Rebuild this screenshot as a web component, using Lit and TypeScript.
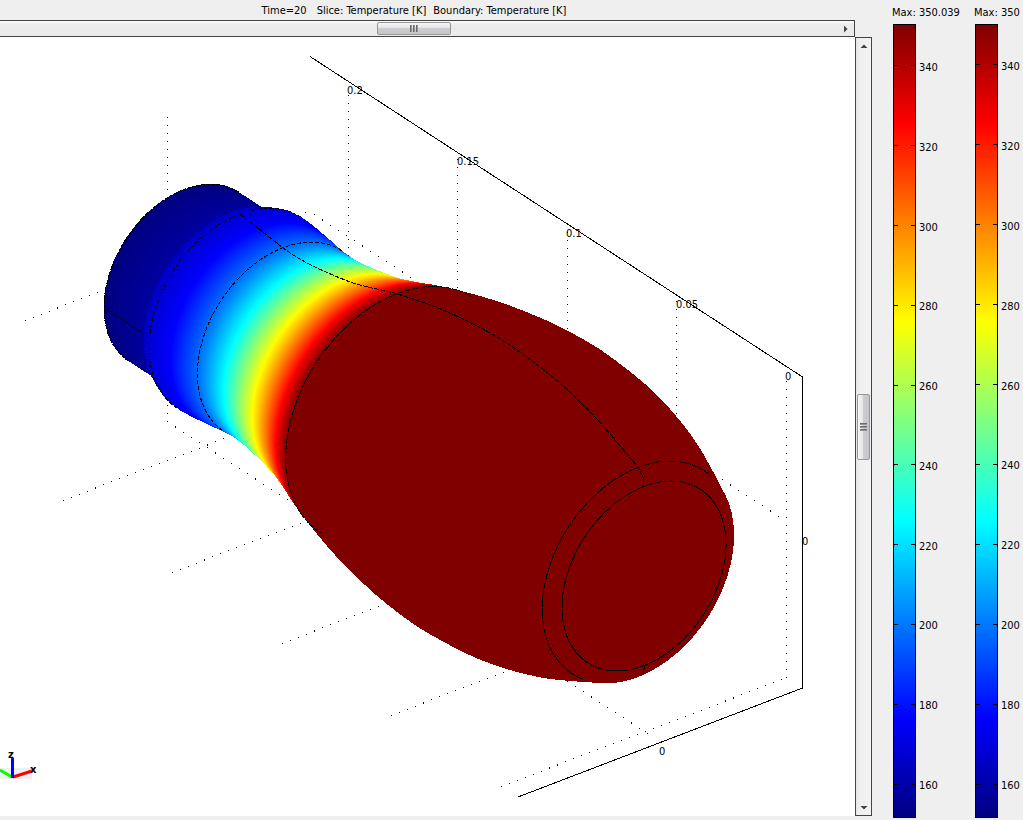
import { LitElement, html, svg, css } from "lit";
import { customElement, property } from "lit/decorators.js";

type Knot = [number, number];

// Radius of the body along its axis (position, scale)
const NECK_END = -549;
const LIP = -494;
const PROFILE: Knot[] = [
  [LIP, 1.055], [-483, 1.1], [-460, 1.08],
  [-431, 1.042], [-415, 1.038], [-390, 1.065], [-352, 1.145], [-331, 1.215],
  [-295, 1.355], [-236, 1.518], [-171, 1.602], [-114, 1.567], [-79, 1.488],
  [-51, 1.387], [-7, 1.17],
];

// Temperature along the axis, as a position on the jet scale
const HEAT: Knot[] = [
  [NECK_END, 0], [LIP - 1, 0.035], [LIP, 0.065], [-483, 0.08], [-460, 0.125],
  [-431, 0.23], [-399, 0.375], [-357, 0.625], [-314, 0.875], [-295, 1], [0, 1],
];

function sample(table: Knot[], x: number): number {
  for (let i = 1; i < table.length; i++) {
    const [x1, y1] = table[i];
    const [x0, y0] = table[i - 1];
    if (x <= x1) return y0 + ((y1 - y0) * (x - x0)) / (x1 - x0);
  }
  return table[table.length - 1][1];
}

function slope(i: number): number {
  const a = PROFILE[Math.max(0, i - 1)];
  const b = PROFILE[Math.min(PROFILE.length - 1, i + 1)];
  return (b[1] - a[1]) / (b[0] - a[0]);
}

// Cubic Hermite curve through the profile; the neck is a plain cylinder
function radius(x: number): number {
  if (x < LIP) return 0.975;
  let i = 1;
  while (i < PROFILE.length - 1 && x > PROFILE[i][0]) i++;
  const [x0, y0] = PROFILE[i - 1];
  const [x1, y1] = PROFILE[i];
  const h = x1 - x0;
  const t = (x - x0) / h;
  const t2 = t * t;
  const t3 = t2 * t;
  return (2 * t3 - 3 * t2 + 1) * y0 + (t3 - 2 * t2 + t) * h * slope(i - 1)
    + (3 * t2 - 2 * t3) * y1 + (t3 - t2) * h * slope(i);
}

function jet(v: number): string {
  const c = (k: number) =>
    Math.round(255 * Math.max(0, Math.min(1, 1.5 - Math.abs(4 * v - k))));
  return `rgb(${c(3)},${c(2)},${c(1)})`;
}

const AX = 0.838;
const AY = 0.545;
const centre = (c: number) => [644 + AX * c, 576 + AY * c];

function disc(c: number, s: number, fill: string) {
  const [x, y] = centre(c);
  return svg`<ellipse rx=${71 * s} ry=${103.5 * s} fill=${fill} transform="translate(${x} ${y}) rotate(33)"></ellipse>`;
}

function arc(c: number, s: number, reach: number, dash: string) {
  const [x, y] = centre(c);
  const pts: string[] = [];
  for (let a = -reach; a <= reach; a += 2) {
    const r = (a * Math.PI) / 180;
    const u = -71 * s * Math.cos(r);
    const n = 103.5 * s * Math.sin(r);
    pts.push(`${(x + u * AX - n * AY).toFixed(1)},${(y + u * AY + n * AX).toFixed(1)}`);
  }
  return svg`<polyline class="edge" points=${pts.join(" ")} stroke-dasharray=${dash}></polyline>`;
}

@customElement("scroll-track")
class ScrollTrack extends LitElement {
  @property({ type: Boolean, reflect: true }) vertical = false;

  static styles = css`
    :host { display: flex; box-sizing: border-box; border: 1px solid #444; border-left-width: 0;
      background: linear-gradient(#fafafa, #ececec 4px, #ebebeb); align-items: center; }
    :host([vertical]) { flex-direction: column; border-left-width: 1px;
      background: linear-gradient(90deg, #e6e6e6, #f0f0f0 4px, #f2f2f2); }
    .before, .after { display: flex; align-items: center; }
    .before { flex: 377; }
    .after { flex: 404; justify-content: flex-end; }
    :host([vertical]) .before { flex: 356; align-items: flex-start; }
    :host([vertical]) .after { flex: 356; align-items: flex-end; }
    .step { border: 0; padding: 0; background: none; width: 15px; height: 15px; display: grid; place-items: center; }
    .thumb { display: flex; justify-content: center; align-items: center; gap: 1px; padding: 0;
      width: 74px; height: 13px; border: 1px solid #979797; border-radius: 2px; box-sizing: border-box;
      background: linear-gradient(#f6f6f6, #e4e4e6 45%, #cdcdd1 50%, #c6c6ca); }
    :host([vertical]) .thumb { flex-direction: column; width: 13px; height: 66px;
      background: linear-gradient(90deg, #f6f6f6, #e4e4e6 45%, #cdcdd1 50%, #c6c6ca); }
    .grip { width: 2px; height: 7px; background: linear-gradient(90deg, #555, #aaa); }
    :host([vertical]) .grip { width: 7px; height: 2px; background: linear-gradient(#555, #aaa); }
  `;

  render() {
    const arrow = (d: string, label: string) => html`
      <button class="step" aria-label=${label}>
        <svg width="8" height="8" viewBox="0 0 8 8"><path d=${d} fill="#444"></path></svg>
      </button>`;
    return html`
      <div class="before">${this.vertical ? arrow("M0.5 6L4 2.5L7.5 6Z", "Scroll up") : ""}</div>
      <button class="thumb" aria-label="Scroll position">
        <span class="grip"></span><span class="grip"></span><span class="grip"></span>
      </button>
      <div class="after">
        ${this.vertical ? arrow("M0.5 2L4 5.5L7.5 2Z", "Scroll down") : arrow("M1 0.5L4.5 4L1 7.5Z", "Scroll right")}
      </div>`;
  }
}

@customElement("colour-scale")
class ColourScale extends LitElement {
  @property() max = "";
  @property({ type: Number }) lead = 40;

  static styles = css`
    :host { display: flex; flex-direction: column; width: 82px; flex: none; }
    .max { box-sizing: border-box; height: 24px; padding-top: 1px; line-height: 24px; white-space: nowrap; }
    .row { display: flex; flex: 1; min-height: 0; }
    .bar { box-sizing: border-box; width: 23px; border: 1px solid #000; display: flex; flex-direction: column; margin-left: 1px;
      background: linear-gradient(#800000, #f00 12.5%, #ff0 37.5%, #0ff 62.5%, #00f 87.5%, #000080); }
    .tick { height: 1px; flex: none; display: flex; justify-content: space-between; }
    .tick::before, .tick::after { content: ""; width: 4px; background: #000; }
    .gap { flex: 789; }
    .labels { display: flex; flex-direction: column; padding: 1px 0 0 3px; }
    .label { height: 1px; line-height: 1px; flex: none; }
    .between { flex: 788; }
    .tail { flex: 320; }
  `;

  render() {
    const marks = [340, 320, 300, 280, 260, 240, 220, 200, 180, 160];
    const lead = (n: number) => html`<div style="flex:${n * 10}"></div>`;
    return html`
      <div class="max">${this.max}</div>
      <div class="row">
        <div class="bar">${marks.map((_, i) => html`${i ? html`<div class="gap"></div>` : lead(this.lead)}<div class="tick"></div>`)}<div class="tail"></div></div>
        <div class="labels">${marks.map((m, i) => html`${i ? html`<div class="between"></div>` : lead(this.lead + 2)}<div class="label">${m}</div>`)}<div class="tail"></div></div>
      </div>`;
  }
}

@customElement("app-root")
class AppRoot extends LitElement {
  static styles = css`
    :host { display: grid; grid-template-columns: minmax(0, 1fr) 151px; height: 100vh; overflow: hidden;
      background: #efefef; color: #000; font: 11px/14px "DejaVu Sans Condensed", "Noto Sans", sans-serif; }
    .view { display: grid; grid-template: 20px 17px minmax(0, 1fr) 4px / minmax(0, 1fr) 17px; }
    .title { margin: 0; font: inherit; line-height: 20px; display: flex; justify-content: center; gap: 10px; padding: 1px 27px 0 0; }
    .title span:last-child { margin-left: -3px; }
    .across { grid-area: 2 / 1; }
    .down { grid-area: 3 / 2; }
    .plot { grid-area: 3 / 1; background: #fff; min-width: 0; overflow: hidden; }
    .plot svg { display: block; width: 100%; height: 100%; }
    .scales { display: flex; padding: 0 0 2px 20px; overflow: hidden; }
    .edge { fill: none; stroke: #000; }
    .dots { fill: none; stroke: #000; stroke-dasharray: 1 7; }
    .slant { fill: none; stroke: #000; stroke-dasharray: 1 7.57; }
    .deep { fill: none; stroke: #000; stroke-dasharray: 1 8.54; }
    .axis { font-weight: bold; font-size: 11px; }
    .triad { fill: none; stroke-width: 3; }
  `;

  private body() {
    const parts = [];
    for (let c = NECK_END; c <= -7; c += c < -290 ? 0.5 : 2) {
      parts.push(disc(c, radius(c), jet(sample(HEAT, c))));
    }
    parts.push(disc(-7, 1.17, "#800000"));
    return parts;
  }

  private meridian() {
    const pts = [];
    for (let c = -483; c <= -7; c += 4) {
      const [x, y] = centre(c);
      pts.push(`${x.toFixed(1)},${(y - 89.6 * radius(c)).toFixed(1)}`);
    }
    pts.push("638,467", "643,477", "644,486");
    return svg`<polyline class="edge" points=${pts.join(" ")} stroke-dasharray="5 1"></polyline>`;
  }

  render() {
    return html`
      <main class="view">
        <h1 class="title"><span>Time=20</span><span>Slice: Temperature [K]</span><span>Boundary: Temperature [K]</span></h1>
        <scroll-track class="across"></scroll-track>
        <div class="plot">
          <svg viewBox="0 37 855 779" preserveAspectRatio="xMinYMin meet" role="img" aria-label="Temperature plot">
            <g shape-rendering="crispEdges">
              <path class="dots" d="M167.5 117V422M348.5 95V390M457.5 159V462M567.5 232V534M676.5 301V606M786.5 381V678"></path>
              <path class="slant" d="M25 320.500L306 212.500M63 500.500L348 391M172 572.500L457 463M282 643.500L567 534M391 715.500L676 606M501 786.500L786 678"></path>
              <path class="deep" d="M314 214.500L786 521M167 421.500L650 735"></path>
              <path class="edge" d="M310 56.500L802.500 377V688L518 797"></path>
              ${this.body()}
              ${arc(NECK_END, 0.975, 90, "4 1")}
              ${arc(-483, 1.1, 90, "4 2")}
              ${arc(-431, 1.042, 90, "4 2")}
              ${arc(-295, 1.355, 90, "5 1")}
              ${arc(-7, 1.17, 98, "12 1")}
              ${arc(0, 1, 180, "none")}
              ${this.meridian()}
              <path class="edge" d="M104 307.500L143 333.500M644.500 666L643 674"></path>
            </g>
            <text x="347" y="94">0.2</text>
            <text x="457" y="165">0.15</text>
            <text x="566" y="237">0.1</text>
            <text x="676" y="308">0.05</text>
            <text x="785" y="380">0</text>
            <text x="802" y="545">0</text>
            <text x="659" y="755">0</text>
            <path d="M0 768H32V779H0Z" fill="#efefef"></path>
            <path class="triad" stroke="#0f0" d="M0 770L12 777"></path>
            <path class="triad" stroke="#f00" d="M13 777L32 771"></path>
            <path class="triad" stroke="#00f" d="M12.500 778V758"></path>
            <text class="axis" x="8" y="758">z</text>
            <text class="axis" x="30" y="773">x</text>
          </svg>
        </div>
        <scroll-track class="down" vertical></scroll-track>
      </main>
      <aside class="scales">
        <colour-scale max="Max: 350.039" .lead=${40}></colour-scale>
        <colour-scale max="Max: 350" .lead=${39}></colour-scale>
      </aside>`;
  }
}
